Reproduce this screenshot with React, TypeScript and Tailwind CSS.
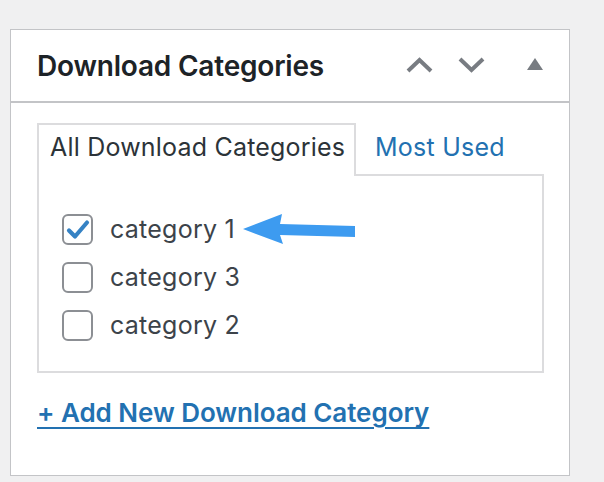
import React from "react";

function Checkbox({ checked }: { checked?: boolean }) {
  return (
    <span className="flex h-[31px] w-[31px] shrink-0 items-center justify-center rounded-[6px] border-2 border-[#8c8f94] bg-white">
      {checked && (
        <svg width="24" height="22" viewBox="0 0 24 22">
          <path d="M3 11.5 L9 17.5 L21 3.5" fill="none" stroke="#3582c4" strokeWidth="4.2" strokeLinecap="round" strokeLinejoin="round" />
        </svg>
      )}
    </span>
  );
}

export default function App() {
  const cats = [
    { name: "category 1", checked: true },
    { name: "category 3", checked: false },
    { name: "category 2", checked: false },
  ];
  return (
    <div className="relative h-[482px] w-[604px] overflow-hidden bg-[#f0f0f1] pl-[10px] pt-[29px]" style={{ fontFamily: "Inter, 'Liberation Sans', sans-serif" }}>
      <div className="h-[447px] w-[560px] border border-[#c3c4c7] bg-white">
        <div className="flex h-[73px] items-center border-b-2 border-[#c3c4c7] pl-[26px] pr-[26px]">
          <h2 className="flex-1 text-[28px] font-semibold leading-none tracking-[-0.2px] text-[#1d2327]">Download Categories</h2>
          <div className="flex items-center">
            <svg width="27" height="16" viewBox="0 0 27 16" className="mt-[-2px]">
              <polyline points="2,14 13.5,3 25,14" fill="none" stroke="#787c82" strokeWidth="4" />
            </svg>
            <svg width="27" height="16" viewBox="0 0 27 16" className="ml-[25px] mt-[-2px]">
              <polyline points="2,2 13.5,13 25,2" fill="none" stroke="#787c82" strokeWidth="4" />
            </svg>
            <svg width="16" height="12" viewBox="0 0 16 12" className="ml-[42px] mt-[-4px]">
              <polygon points="8,0 16,12 0,12" fill="#787c82" />
            </svg>
          </div>
        </div>
        <div className="px-[26px] pt-[20px]">
          <div className="flex items-end">
            <div className="relative z-10 mb-[-2px] flex h-[53px] w-[319px] items-start border-2 border-b-0 border-[#dcdcde] bg-white pl-[11px] pt-[6px]">
              <span className="text-[25px] leading-[32px] tracking-[0.2px] text-[#2c3338]">All Download Categories</span>
            </div>
            <div className="flex h-[51px] items-start pl-[19px] pt-[8px]">
              <span className="text-[25px] leading-[32px] tracking-[0.25px] text-[#2271b1]">Most Used</span>
            </div>
          </div>
          <div className="flex h-[199px] w-[507px] flex-col gap-[17px] border-2 border-[#dcdcde] pl-[23px] pt-[38px]">
            {cats.map((c) => (
              <div key={c.name} className="flex h-[31px] items-center gap-[17px]">
                <Checkbox checked={c.checked} />
                <span className="text-[25px] leading-none tracking-[0.25px] text-[#3c434a]">{c.name}</span>
              </div>
            ))}
          </div>
          <div className="pt-[27px]">
            <a href="#" className="text-[26px] font-semibold leading-none tracking-[-0.05px] text-[#2271b1] underline decoration-2 underline-offset-[5px]">
              + Add New Download Category
            </a>
          </div>
        </div>
      </div>
      <svg className="absolute left-[240px] top-[211px]" width="120" height="36" viewBox="0 0 120 36">
        <polygon points="3,18 42,3 40,13 115,15 115,26 40,24 43,33" fill="#3d9bf0" />
      </svg>
    </div>
  );
}
